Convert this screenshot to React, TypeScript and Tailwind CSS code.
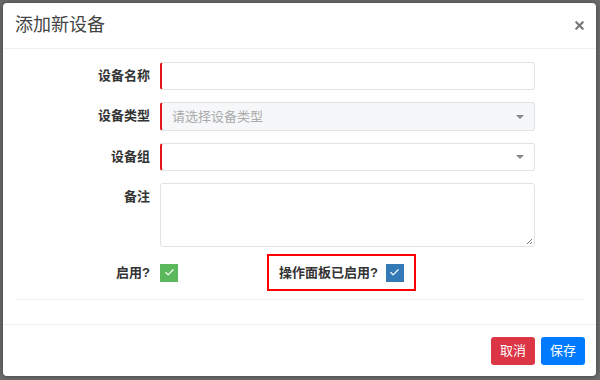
import { Check, X } from 'lucide-react'

const font = { fontFamily: '"Liberation Sans", "Noto Sans CJK SC", sans-serif' }

function Caret() {
  return <span className="ml-auto h-0 w-0 border-x-[4px] border-t-[4px] border-x-transparent border-t-[#888]" />
}

function FieldRow({ label, children }: { label: string; children: React.ReactNode }) {
  return (
    <div className="flex items-start">
      <div className="w-[147px] pr-0 text-right text-[13px] font-bold leading-[28px] text-[#333]">{label}</div>
      <div className="ml-[10px] w-[375px]">{children}</div>
    </div>
  )
}

export default function App() {
  return (
    <div className="h-[380px] w-[600px] overflow-hidden bg-[#6c6c6c] p-[3px] pr-[4px]" style={font}>
      <div className="flex h-[373px] w-[593px] flex-col rounded-[4px] bg-white shadow-[0_0_6px_rgba(0,0,0,0.4)]">
        <div className="flex h-[46px] items-center border-b border-[#eef0f2] px-[12px]">
          <span className="text-[18px] text-[#444]">添加新设备</span>
          <X className="ml-auto -mr-[2px] text-[#777]" size={13} strokeWidth={4} />
        </div>

        <div className="flex flex-col gap-[12px] pt-[13px]">
          <FieldRow label="设备名称">
            <div className="h-[28px] rounded-[3px] border border-l-2 border-[#dfe2e6] border-l-[#e5141b]" />
          </FieldRow>
          <FieldRow label="设备类型">
            <div className="flex h-[29px] items-center rounded-[3px] border border-l-2 border-[#dfe2e6] border-l-[#e5141b] bg-[#f6f7f9] pl-[10px] pr-[10px] text-[13px] text-[#aaa]">
              请选择设备类型
              <Caret />
            </div>
          </FieldRow>
          <FieldRow label="设备组">
            <div className="flex h-[28px] items-center rounded-[3px] border border-l-2 border-[#dfe2e6] border-l-[#e5141b] pr-[10px]">
              <Caret />
            </div>
          </FieldRow>
          <FieldRow label="备注">
            <div className="relative h-[64px] rounded-[3px] border border-[#dfe2e6]">
              <svg className="absolute bottom-[1px] right-[1px]" width="7" height="7" viewBox="0 0 7 7">
                <path d="M1 6 L6 1 M4 6 L6 4" stroke="#777" strokeWidth="1" />
              </svg>
            </div>
          </FieldRow>
        </div>

        <div className="mt-[7px] flex items-center">
          <div className="flex h-[36px] w-[147px] items-center justify-end text-[13px] font-bold text-[#333]">启用?</div>
          <span className="ml-[10px] flex h-[18px] w-[18px] items-center justify-center bg-[#5cb85c]">
            <Check size={11} strokeWidth={2.5} className="text-white" />
          </span>
          <div className="ml-[89px] flex h-[37px] w-[149px] items-center border-2 border-[#ff0000] pl-[10px]">
            <span className="text-[13px] font-bold text-[#333]">操作面板已启用?</span>
            <span className="ml-[8px] flex h-[18px] w-[18px] items-center justify-center bg-[#337ab7]">
              <Check size={11} strokeWidth={2.5} className="text-white" />
            </span>
          </div>
        </div>

        <div className="mx-[12px] mt-[8px] border-t border-[#eceef0]" />

        <div className="mt-[24px] flex items-start justify-end gap-[6px] border-t border-[#eef0f2] px-[11px] pt-[12px]">
          <button className="h-[28px] w-[44px] rounded-[3px] bg-[#dc3545] text-[13px] text-white">取消</button>
          <button className="h-[28px] w-[44px] rounded-[3px] bg-[#007bff] text-[13px] text-white">保存</button>
        </div>
      </div>
    </div>
  )
}
